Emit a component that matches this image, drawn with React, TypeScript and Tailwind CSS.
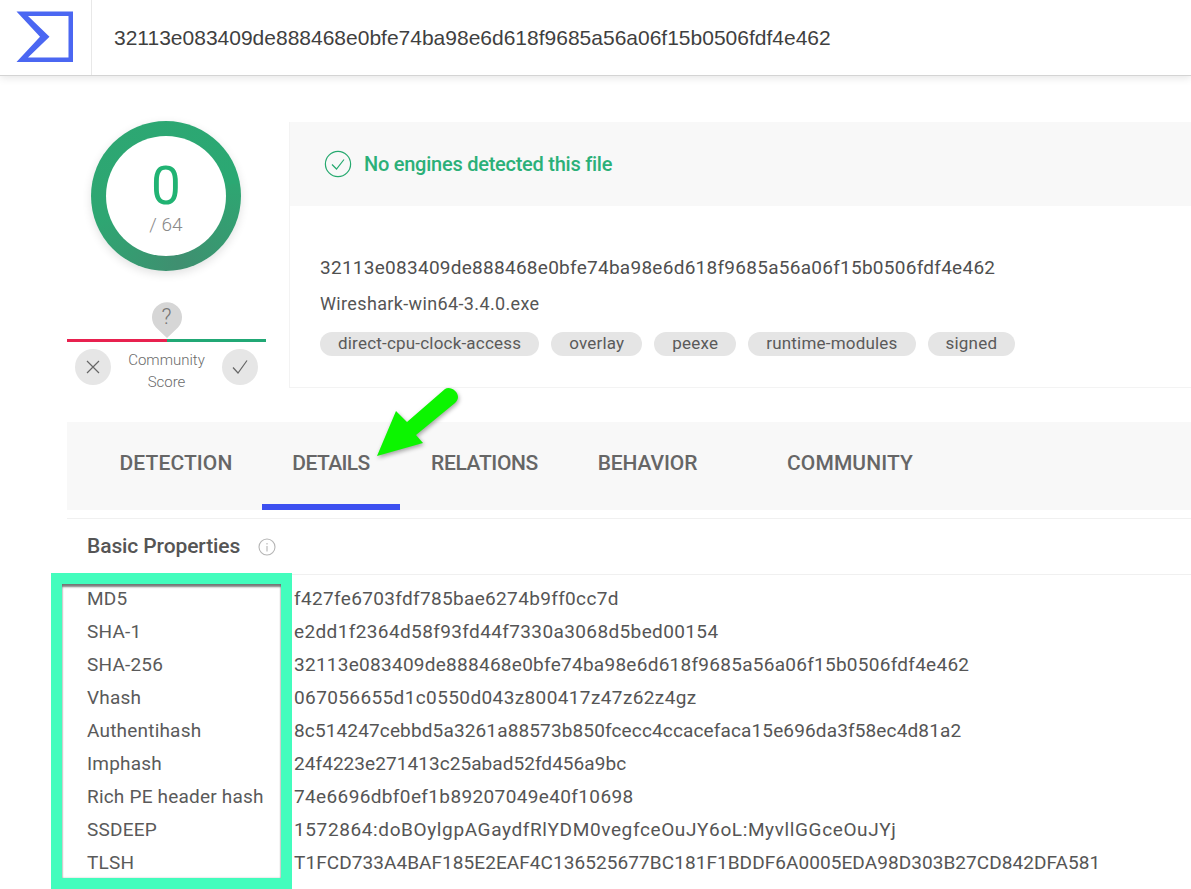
import { FC } from "react";

const hash = "32113e083409de888468e0bfe74ba98e6d618f9685a56a06f15b0506fdf4e462";

const tags = ["direct-cpu-clock-access", "overlay", "peexe", "runtime-modules", "signed"];

const tabs = [
  { name: "DETECTION", width: "w-[172px]", spacing: "tracking-[0.1px]" },
  { name: "DETAILS", width: "w-[138px]", spacing: "tracking-[-0.6px]", active: true },
  { name: "RELATIONS", width: "w-[169px]", spacing: "tracking-[-0.35px]" },
  { name: "BEHAVIOR", width: "w-[157px]", spacing: "tracking-[-0.1px]" },
  { name: "COMMUNITY", width: "w-[248px]", spacing: "tracking-[0.1px]" },
];

const rows = [
  ["MD5", "f427fe6703fdf785bae6274b9ff0cc7d", "tracking-[0.34px]"],
  ["SHA-1", "e2dd1f2364d58f93fd44f7330a3068d5bed00154", "tracking-[0.38px]"],
  ["SHA-256", hash, "tracking-[0.27px]"],
  ["Vhash", "067056655d1c0550d043z800417z47z62z4gz", "tracking-[0.39px]"],
  ["Authentihash", "8c514247cebbd5a3261a88573b850fcecc4ccacefaca15e696da3f58ec4d81a2", "tracking-[0.14px]"],
  ["Imphash", "24f4223e271413c25abad52fd456a9bc", "tracking-[0.06px]"],
  ["Rich PE header hash", "74e6696dbf0ef1b89207049e40f10698", "tracking-[0.37px]"],
  ["SSDEEP", "1572864:doBOylgpAGaydfRlYDM0vegfceOuJY6oL:MyvllGGceOuJYj", "tracking-[0.62px]"],
  ["TLSH", "T1FCD733A4BAF185E2EAF4C136525677BC181F1BDDF6A0005EDA98D303B27CD842DFA581", "tracking-[0.07px]"],
  ["File type", "Win32 EXE", "tracking-[0.28px]"],
];

const Logo: FC = () => (
  <svg width="91" height="75" viewBox="0 0 91 75" className="block">
    <path
      fill="#4b67f2"
      fillRule="evenodd"
      d="M16.5 11.5H73V62H16.5L40 36.7ZM28 16L49.5 36.7L28 57.5H68.5V16Z"
    />
  </svg>
);

const ScoreColumn: FC = () => (
  <div className="flex w-[199px] shrink-0 flex-col items-center">
    <div className="mr-[1px] flex h-[150px] w-[150px] items-center justify-center rounded-full bg-[conic-gradient(from_80deg,#2ea672,#3f8f70_90deg,#2ea672_170deg,#2ba873_360deg)] shadow-[0_3px_10px_rgba(0,0,0,0.12)]">
      <div className="flex h-[120px] w-[120px] flex-col items-center rounded-full bg-white">
        <div className="mt-[26px] text-[53px] leading-[48px] font-normal text-[#21b373]">0</div>
        <div className="mt-[2px] text-[19px] leading-[26px] font-light text-[#8a8a8a]">/ 64</div>
      </div>
    </div>
    <div className="relative mt-[31px] flex h-[36px] w-[30px] justify-center">
      <svg width="30" height="36" viewBox="0 0 30 36" className="absolute top-0 left-0">
        <path fill="#d6d6d6" d="M15 36L4 25.4A15 15 0 1 1 26 25.4Z" />
      </svg>
      <div className="relative text-[22px] leading-[30px] font-light text-[#777]">?</div>
    </div>
    <div className="mt-[1px] flex h-[3px] w-full">
      <div className="w-1/2 bg-[#e8214f]" />
      <div className="w-1/2 bg-[#21a875]" />
    </div>
    <div className="mt-[7px] flex w-full items-start justify-between px-[8px]">
      <div className="flex h-[36px] w-[36px] items-center justify-center rounded-full bg-[#e6e6e6]">
        <svg width="16" height="16" viewBox="0 0 16 16" fill="none" stroke="#666" strokeWidth="1.2">
          <path d="M2 2L14 14M14 2L2 14" />
        </svg>
      </div>
      <div className="text-center text-[15px] leading-[22px] font-light text-[#6b6b6b]">
        Community
        <br />
        Score
      </div>
      <div className="flex h-[36px] w-[36px] items-center justify-center rounded-full bg-[#e6e6e6]">
        <svg width="18" height="16" viewBox="0 0 18 16" fill="none" stroke="#666" strokeWidth="1.2">
          <path d="M2 8.5L7 14L16 1.5" />
        </svg>
      </div>
    </div>
  </div>
);

const SummaryPanel: FC = () => (
  <div className="mt-[1px] ml-[23px] h-[266px] flex-1 border-b border-l border-[#f3f3f3]">
    <div className="flex h-[84px] items-center gap-[12px] bg-[#f8f8f8] pl-[34px]">
      <svg width="28" height="28" viewBox="0 0 28 28" fill="none" stroke="#26a96f" strokeWidth="1.2">
        <circle cx="14" cy="14" r="12.6" />
        <path d="M8 14.5L12.5 19L20 9.5" />
      </svg>
      <div className="text-[20px] font-medium tracking-[-0.25px] text-[#2bb078]">No engines detected this file</div>
    </div>
    <div className="pl-[30px]">
      <div className="mt-[49px] text-[19px] leading-[26px] tracking-[0.27px] text-[#4f4f4f]">{hash}</div>
      <div className="mt-[10px] text-[18px] leading-[26px] tracking-[0.36px] text-[#555]">Wireshark-win64-3.4.0.exe</div>
      <div className="mt-[15px] flex gap-[12px]">
        {tags.map((tag) => (
          <div key={tag} className="flex h-[24px] items-center rounded-full bg-[#e5e5e5] px-[18px] text-[17px] tracking-[0.2px] text-[#5a5a5a]">
            {tag}
          </div>
        ))}
      </div>
    </div>
  </div>
);

const App: FC = () => {
  return (
    <div className="relative h-[889px] w-full overflow-hidden bg-white font-['Roboto',sans-serif]">
      <div className="flex h-[76px] border-b border-[#d4d4d4] bg-white shadow-[0_2px_8px_rgba(0,0,0,0.1)]">
        <div className="w-[92px] shrink-0 border-r border-[#e8e8e8]">
          <Logo />
        </div>
        <div className="flex items-center pl-[22px] font-['Liberation_Sans',sans-serif] text-[21px] text-[#3f3f3f]">
          {hash}
        </div>
      </div>

      <div className="pt-[45px] pl-[67px]">
        <div className="flex items-start">
          <ScoreColumn />
          <SummaryPanel />
        </div>

        <div className="mt-[29px] flex h-[88px] bg-[#f8f8f8] pl-[23px]">
          {tabs.map((tab) => (
            <div key={tab.name} className={`${tab.width} flex justify-center pt-[26px] ${tab.active ? "border-b-[6px] border-[#3d50f0]" : ""}`}>
              <div className={`text-[21px] leading-[30px] font-medium text-[#666] ${tab.spacing}`}>{tab.name}</div>
            </div>
          ))}
        </div>

        <div className="mt-[8px] flex h-[57px] items-center gap-[18px] border-y border-[#f0f0f0] pl-[20px]">
          <div className="text-[21px] font-medium tracking-[-0.1px] text-[#555]">Basic Properties</div>
          <svg width="18" height="18" viewBox="0 0 18 18" fill="none" stroke="#b5b5b5" strokeWidth="1.1">
            <circle cx="9" cy="9" r="8" />
            <path d="M9 8V13.5M9 5V6.4" />
          </svg>
        </div>

        <div className="pt-[8px]">
          {rows.map(([label, value, spacing]) => (
            <div key={label} className="flex h-[33px] items-center text-[19px] text-[#555]">
              <div className="w-[227px] shrink-0 pl-[20px] tracking-[0.2px] text-[#5a5a5a]">{label}</div>
              <div className={`whitespace-nowrap ${spacing}`}>{value}</div>
            </div>
          ))}
        </div>
      </div>

      {/* annotations pasted over the screenshot */}
      <div className="absolute top-[573px] left-[51px] h-[316px] w-[241px] border-[11px] border-[#43fdbd] shadow-[inset_0_3px_2px_rgba(0,0,0,0.5),inset_0_0_2px_rgba(0,0,0,0.25)]" />
      <svg width="100" height="80" viewBox="0 0 100 80" className="absolute top-[384px] left-[370px] drop-shadow-[1px_2px_2px_rgba(0,0,0,0.35)]">
        <path
          fill="#0cf500"
          d="M7 72L26 27L37 38L75 5C80 2 88 7 88 13C88 15 87 17 85 19L46 51L53 59Z"
        />
      </svg>
    </div>
  );
};

export default App;
